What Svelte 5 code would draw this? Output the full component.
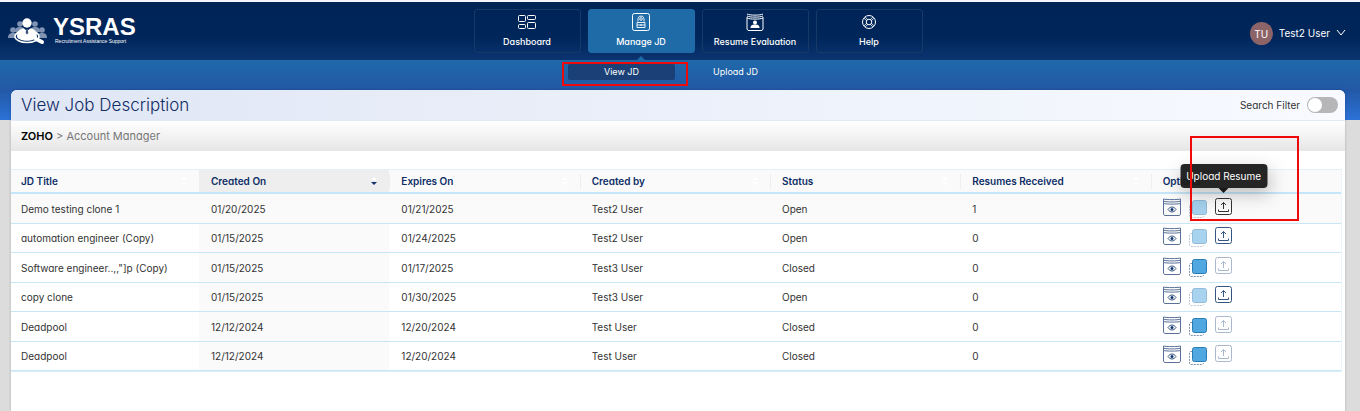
<script lang="ts">
	type Job = {
		title: string;
		created: string;
		expires: string;
		author: string;
		status: 'Open' | 'Closed';
		resumes: number;
	};

	const navItems = [
		{ id: 'dashboard', label: 'Dashboard' },
		{ id: 'jd', label: 'Manage JD' },
		{ id: 'resume', label: 'Resume Evaluation' },
		{ id: 'help', label: 'Help' }
	];

	const columns = ['JD Title', 'Created On', 'Expires On', 'Created by', 'Status', 'Resumes Received'];

	const jobs: Job[] = [
		{ title: 'Demo testing clone 1', created: '01/20/2025', expires: '01/21/2025', author: 'Test2 User', status: 'Open', resumes: 1 },
		{ title: 'automation engineer (Copy)', created: '01/15/2025', expires: '01/24/2025', author: 'Test2 User', status: 'Open', resumes: 0 },
		{ title: 'Software engineer..,,"]p (Copy)', created: '01/15/2025', expires: '01/17/2025', author: 'Test3 User', status: 'Closed', resumes: 0 },
		{ title: 'copy clone', created: '01/15/2025', expires: '01/30/2025', author: 'Test3 User', status: 'Open', resumes: 0 },
		{ title: 'Deadpool', created: '12/12/2024', expires: '12/20/2024', author: 'Test User', status: 'Closed', resumes: 0 },
		{ title: 'Deadpool', created: '12/12/2024', expires: '12/20/2024', author: 'Test User', status: 'Closed', resumes: 0 }
	];

	let activeNav = $state('jd');
	let filterOn = $state(false);
</script>

<div class="page">
	<header class="topbar">
		<a href="/" class="brand">
			<svg class="brand-icon" viewBox="0 0 40 27" aria-hidden="true">
				<g fill="#8193b3">
					<circle cx="5" cy="12" r="2.800" />
					<path d="M0 20c0-4 2-5 5-5s5 1 5 5z" />
					<circle cx="34" cy="12" r="2.800" />
					<path d="M29 20c0-4 2-5 5-5s5 1 5 5z" />
					<circle cx="12" cy="6" r="2.800" />
					<path d="M7 14c0-4 2-5 5-5s5 1 5 5z" />
					<circle cx="27" cy="6" r="2.800" />
					<path d="M22 14c0-4 2-5 5-5s5 1 5 5z" />
				</g>
				<ellipse cx="19" cy="18.500" rx="12" ry="6" fill="#002761" stroke="#fff" stroke-width="1.500" />
				<path d="M28 21l6 3" stroke="#fff" stroke-width="4" stroke-linecap="round" />
				<circle cx="19" cy="5" r="4.700" fill="#fff" />
				<path d="M9 19c0-6 3-8.500 7-8.500l3 3 3-3c4 0 7 2.500 7 8.500-3 5-17 5-20 0z" fill="#fff" />
				<path d="M18.300 11h1.400l.6 4-1.300 1.500-1.300-1.500z" fill="#3a5180" />
			</svg>
			<span class="brand-text">
				<span class="brand-name">YSRAS</span>
				<span class="brand-tag">Recruitment Assistance Support</span>
			</span>
		</a>

		<nav class="main-nav" aria-label="Main">
			{#each navItems as item}
				<button class:active={activeNav === item.id} onclick={() => (activeNav = item.id)}>
					<svg viewBox="0 0 18 18" fill="none" stroke="currentColor" aria-hidden="true">
						{#if item.id === 'dashboard'}
							<rect x="0.500" y="2.500" width="7" height="6" rx="1" />
							<rect x="9.500" y="2.500" width="8" height="4" rx="1" />
							<rect x="0.500" y="11.500" width="7" height="4" rx="1" />
							<rect x="9.500" y="9.500" width="8" height="6" rx="1" />
						{:else if item.id === 'jd'}
							<rect x="0.500" y="0.500" width="17" height="17" rx="2" />
							<path d="M6 8.500V5.500l1.500-2.300h3L12 5.500v3M5 9.500h8v5H5zM5 12h8M9 11v2" stroke-width="0.900" />
							<circle cx="9" cy="6" r="1.300" stroke-width="0.900" />
						{:else if item.id === 'resume'}
							<path d="M1 4v12l1 1.500h14l1-1.500V4" />
							<path d="M1 1c3 1.500 13 1.500 16 0M1 3c3 1.500 13 1.500 16 0M1 5c3 1.500 13 1.500 16 0" />
							<circle cx="9" cy="9.500" r="2" fill="currentColor" stroke="none" />
							<path d="M4.500 15c0-3 2-3.500 4.500-3.500s4.500.5 4.500 3.500z" fill="currentColor" stroke="none" />
						{:else}
							<circle cx="9" cy="9" r="6.500" />
							<circle cx="9" cy="9" r="2.800" />
							<path d="M4 5.200L7 8M5.200 4L8 7M14 5.200L11 8M12.800 4L10 7M4 12.800L7 10M5.200 14L8 11M14 12.800L11 10M12.800 14L10 11" stroke-width="0.800" />
						{/if}
					</svg>
					{item.label}
				</button>
			{/each}
		</nav>

		<button class="user">
			<span class="avatar">TU</span>
			<span>Test2 User</span>
			<svg class="chevron" viewBox="0 0 10 8" fill="none" stroke="currentColor" aria-hidden="true">
				<path d="M1 1l4 5 4-5" />
			</svg>
		</button>
	</header>

	<nav class="sub-nav" aria-label="Job descriptions">
		<a href="#view" class="current">View JD<span class="mark"></span></a>
		<a href="#upload">Upload JD</a>
	</nav>

	<main class="card">
		<div class="card-head">
			<h1>View Job Description</h1>
			<label class="filter">
				Search Filter
				<input type="checkbox" role="switch" bind:checked={filterOn} />
			</label>
		</div>
		<p class="crumbs"><b>ZOHO</b> &gt; Account Manager</p>

		<table>
			<thead>
				<tr>
					{#each columns as column}
						<th class:sorted={column === 'Created On'}>
							<div class="th-inner">
								{column}
								<svg class="sort" viewBox="0 0 6 10" aria-hidden="true">
									<path class="up" d="M0 4l3-3 3 3z" />
									<path class="down" d="M0 6h6L3 9z" />
								</svg>
							</div>
						</th>
					{/each}
					<th>Options</th>
				</tr>
			</thead>
			<tbody>
				{#each jobs as job, i}
					<tr>
						<td>{job.title}</td>
						<td class="sorted">{job.created}</td>
						<td>{job.expires}</td>
						<td>{job.author}</td>
						<td>{job.status}</td>
						<td>{job.resumes}</td>
						<td>
							<div class="options" class:closed={job.status === 'Closed'}>
								<button aria-label="View">
									<svg viewBox="0 0 18 18" fill="none" stroke="#5b7199" aria-hidden="true">
										<path d="M.5 1v15l1 1.500h15l1-1.500V1" />
										<path d="M.5 1c3 .8 14 .8 17 0M.5 3.200c3 1 14 1 17 0M.5 5.500c3 .8 14 .8 17 0" />
										<path d="M5 11.500c2-3.300 6-3.300 8 0-2 3.300-6 3.300-8 0z" stroke="#355582" />
										<circle cx="9" cy="11.500" r="1.500" fill="#0d3570" stroke="none" />
									</svg>
								</button>
								<button class="copy" aria-label="Clone">
									<svg viewBox="0 0 18 18" fill="none" aria-hidden="true">
										<path d="M3 4.500H2q-1.500 0-1.500 1.500v10q0 1.500 1.500 1.500h11q1.500 0 1.500-1.500" stroke="#8093ad" stroke-dasharray="2 1" />
										<rect x="3.500" y="0.500" width="14" height="14" rx="2" fill="#51a8e1" stroke="#277cb4" />
									</svg>
								</button>
								<button class="upload" class:hovered={i === 0} aria-label="Upload Resume">
									<svg viewBox="0 0 18 18" fill="none" stroke="currentColor" aria-hidden="true">
										<rect x="0.500" y="0.500" width="16" height="16" rx="2" />
										<path d="M8.500 11V4.500M6 7l2.500-2.500L11 7M3.500 11.500v2h10v-2" />
									</svg>
									{#if i === 0}
										<span class="tooltip" role="tooltip">Upload Resume</span>
										<span class="mark"></span>
									{/if}
								</button>
							</div>
						</td>
					</tr>
				{/each}
			</tbody>
		</table>
	</main>
</div>

<style>
	:global(body) {
		background: #dcdcdc;
		font-family: Inter, 'Open Sans', sans-serif;
		font-feature-settings: 'cv11';
		font-size: 10px;
		color: #333;
	}

	.page {
		box-sizing: border-box;
		min-height: 100vh;
		display: flex;
		flex-direction: column;
		border-top: 2px solid #f3f5f9;
		background: linear-gradient(#1f69a9, #2358a7 30px, #2c72d6 60px) 0 58px / 100% 60px no-repeat;
	}

	button {
		font: inherit;
		font-feature-settings: inherit;
		color: inherit;
		border: 0;
		padding: 0;
		background: none;
		cursor: pointer;
	}

	svg {
		display: block;
	}

	.topbar {
		display: grid;
		grid-template-columns: 1fr auto 1fr;
		align-items: center;
		height: 58px;
		padding: 0 14px 0 8px;
		background: linear-gradient(#002355, #00265a 60%, #0b3470);
		color: #fff;
	}

	.brand {
		display: flex;
		align-items: center;
		gap: 5px;
		color: #fff;
		text-decoration: none;
		font-family: 'Liberation Sans', Arial, sans-serif;
	}

	.brand-icon {
		width: 40px;
		height: 27px;
	}

	.brand-text {
		display: flex;
		flex-direction: column;
	}

	.brand-name {
		font-size: 24px;
		line-height: 20px;
		font-weight: 700;
	}

	.brand-tag {
		padding-left: 2px;
		font-size: 5px;
		line-height: 8px;
	}

	.main-nav {
		display: flex;
		gap: 7px;
		padding-left: 42px;
	}

	.main-nav button {
		position: relative;
		box-sizing: border-box;
		width: 107px;
		height: 44px;
		display: flex;
		flex-direction: column;
		align-items: center;
		justify-content: space-between;
		padding: 3px 0;
		border: 1px solid #173967;
		border-radius: 3px;
		font-size: 9px;
		line-height: 14px;
		font-weight: 500;
	}

	.main-nav svg {
		width: 18px;
		height: 18px;
	}

	.main-nav .active {
		background: #1f6ba8;
		border-color: #1f6ba8;
	}

	.main-nav .active::after {
		content: '';
		position: absolute;
		bottom: -8px;
		left: 50%;
		margin-left: -4px;
		border: 4px solid transparent;
		border-top: 0;
		border-bottom-color: #1f6ba8;
	}

	.user {
		justify-self: end;
		display: flex;
		align-items: center;
		gap: 6px;
		padding-top: 4px;
	}

	.avatar {
		width: 23px;
		height: 23px;
		border-radius: 50%;
		background: #8c6468;
		line-height: 24px;
	}

	.chevron {
		width: 10px;
		height: 8px;
	}

	.sub-nav {
		display: flex;
		justify-content: center;
		gap: 7px;
		padding: 4px 3px 10px 0;
		font-size: 9px;
	}

	.sub-nav a {
		position: relative;
		width: 107px;
		line-height: 16px;
		border-radius: 2px;
		color: #fff;
		text-align: center;
		text-decoration: none;
	}

	.sub-nav .current {
		background: #1a4077;
	}

	.mark {
		position: absolute;
		border: 2px solid #ee0a0a;
		pointer-events: none;
	}

	.sub-nav .mark {
		inset: -2px -13px -6px -6px;
	}

	.card {
		flex: 1;
		margin: 0 15px 0 11px;
		border-radius: 6px 6px 0 0;
		background: #fff;
		box-shadow: 0 0 3px rgba(0, 0, 0, 0.2);
	}

	.card-head {
		display: flex;
		align-items: center;
		justify-content: space-between;
		height: 30px;
		padding: 0 7px 0 10px;
		border-radius: 6px 6px 0 0;
		background: linear-gradient(90deg, #dfe6f5, #f8faff);
	}

	h1 {
		margin: 0;
		color: #122c66;
		font-size: 17px;
		font-weight: 300;
	}

	.filter {
		display: flex;
		align-items: center;
		gap: 7px;
	}

	.filter input {
		appearance: none;
		width: 31px;
		height: 16px;
		margin: 0;
		border-radius: 8px;
		background: #b6b6b9;
	}

	.filter input::before {
		content: '';
		display: block;
		width: 14px;
		height: 14px;
		margin: 1px;
		border-radius: 50%;
		background: #fff;
	}

	.filter input:checked::before {
		margin-left: 16px;
	}

	.crumbs {
		margin: 0 0 18px;
		padding: 0 10px;
		background: linear-gradient(#fff, #e6e6e6);
		border-top: 1px solid #e3ebf8;
		color: #777;
		font-size: 11px;
		line-height: 30px;
	}

	.crumbs b {
		color: #000;
		font-weight: 600;
	}

	table {
		width: calc(100% - 3px);
		table-layout: fixed;
		border-collapse: separate;
		border-spacing: 0;
		border-right: 1px solid #eaf5fc;
		border-bottom: 1px solid #d9eefa;
	}

	th,
	td {
		box-sizing: border-box;
		padding: 0 12px;
		text-align: left;
		white-space: nowrap;
	}

	th {
		height: 25px;
		border-top: 1px solid #e3f0f8;
		border-bottom: 2px solid #c5e5f8;
		background: #fafafa;
		color: #0d2d66;
		font-weight: 600;
	}

	th:first-child,
	td:first-child {
		width: 188px;
		padding-left: 10px;
	}

	th:not(.sorted):not(:first-child) {
		background: linear-gradient(#eee, #eee) 0 4px / 1px 15px no-repeat #fafafa;
	}

	th.sorted {
		background: #eee;
	}

	.th-inner {
		display: flex;
		align-items: center;
		justify-content: space-between;
	}

	.sort {
		width: 6px;
		height: 10px;
		fill: #fff;
	}

	.sorted .down {
		fill: #12336c;
	}

	td {
		height: 30px;
		border-bottom: 1px solid #c7e7f7;
	}

	tr:nth-child(even) td {
		height: 29px;
	}

	td.sorted,
	tbody tr:first-child td {
		background: #fafafa;
	}

	.options {
		display: flex;
		gap: 8px;
		padding-bottom: 4px;
	}

	.options svg {
		width: 18px;
		height: 18px;
	}

	.options .copy {
		opacity: 0.5;
		padding-top: 2px;
		margin-bottom: -2px;
	}

	.options.closed .copy {
		opacity: 1;
	}

	.upload {
		position: relative;
		color: #355682;
	}

	.upload.hovered {
		color: #333;
	}

	.closed .upload {
		color: #a8b7cb;
	}

	.tooltip {
		position: absolute;
		left: 50%;
		bottom: 28px;
		transform: translateX(-50%);
		padding: 0 6px;
		border-radius: 4px;
		background: rgba(25, 25, 25, 0.95);
		box-shadow: 2px 6px 18px rgba(0, 0, 0, 0.25);
		color: #fff;
		line-height: 24px;
		white-space: nowrap;
	}

	.tooltip::after {
		content: '';
		position: absolute;
		top: 100%;
		left: 50%;
		margin-left: -5px;
		border: 5px solid transparent;
		border-top-color: #191919;
		border-bottom: 0;
	}

	.upload .mark {
		box-sizing: border-box;
		width: 109px;
		height: 85px;
		left: -25px;
		top: -62px;
	}
</style>
